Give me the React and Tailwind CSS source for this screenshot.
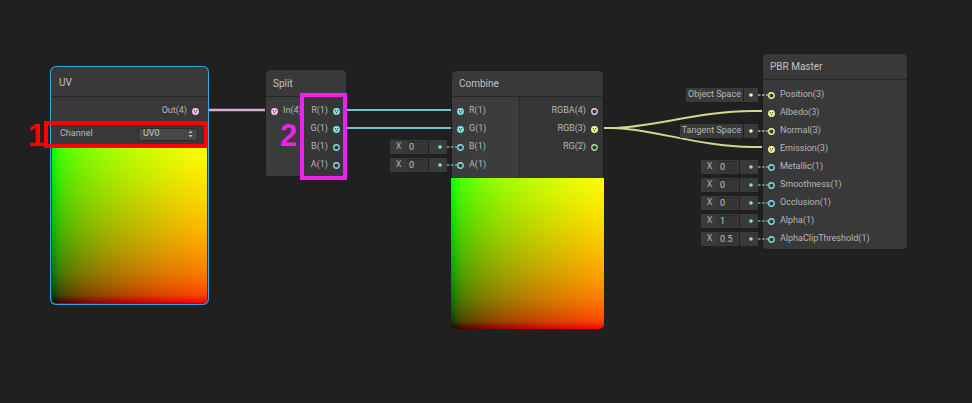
import React from 'react';

const COLORS = { v1: '#84e4e7', v2: '#9aef92', v3: '#f6ff9a', v4: '#fbcbf4' };

const UV_PREVIEW =
  'bg-[linear-gradient(to_right,#000,#410000_5%,#590000_10%,#7b0000_20%,#9e0000_35%,#ba0000_50%,#d90000_70%,#ed0000_85%,#f00),linear-gradient(to_top,#000,#004100_5%,#005900_10%,#007b00_20%,#009e00_35%,#00ba00_50%,#00d900_70%,#00ed00_85%,#0f0)] bg-blend-lighten';

function Port({ type, on }) {
  const c = COLORS[type];
  return (
    <svg width="7" height="7" viewBox="0 0 7 7" className="shrink-0">
      {on ? (
        <>
          <circle cx="3.5" cy="3.5" r="3.4" fill={c} />
          <rect x="1.8" y="2.2" width="1.2" height="1.2" fill="#3a3a3a" />
          <rect x="4" y="2.2" width="1.2" height="1.2" fill="#3a3a3a" />
          <rect x="2.9" y="4.2" width="1.2" height="1.2" fill="#3a3a3a" />
        </>
      ) : (
        <circle cx="3.5" cy="3.5" r="2.75" fill="none" stroke={c} strokeWidth="1.3" />
      )}
    </svg>
  );
}

function Dot({ type }) {
  return (
    <svg width="4" height="4" viewBox="0 0 4 4">
      <circle cx="2" cy="2" r="1.8" fill={COLORS[type]} />
    </svg>
  );
}

function Control({ type, kind, value, label }) {
  return (
    <>
      <div className="absolute right-[calc(100%+5px)] top-1/2 flex h-[14px] -translate-y-1/2 gap-px">
        {kind === 'x' ? (
          <div className="flex w-[38px] items-center bg-[#3a3a3a]">
            <span className="w-[17px] text-center text-[#b0b0b0]">X</span>
            <span className="h-[12px] w-[20px] border-t border-[#2b2b2b] bg-[#353535] pl-[2px] leading-[11px] text-[#c0c0c0]">{value}</span>
          </div>
        ) : (
          <div className={'flex items-center justify-center bg-[#3a3a3a] text-[#b8b8b8] ' + (label === 'Tangent Space' ? 'w-[63px]' : 'w-[57px]')}>
            {label}
          </div>
        )}
        <div className={'flex items-center justify-end bg-[#3a3a3a] pr-[5px] ' + (kind === 'x' ? 'w-[18px]' : 'w-[14px]')}>
          <Dot type={type} />
        </div>
      </div>
      <svg className="absolute left-[-5px] top-1/2 -translate-y-1/2" width="10" height="2" viewBox="0 0 10 2">
        <line x1="0" y1="1" x2="10" y2="1" stroke={COLORS[type]} strokeWidth="1.2" strokeDasharray="2.5 1.5" />
      </svg>
    </>
  );
}

function InRow({ label, type, on, control }) {
  return (
    <div className="relative flex h-[18px] items-center gap-[5px] pl-[5px]">
      {control && <Control type={type} {...control} />}
      <Port type={type} on={on} />
      <span>{label}</span>
    </div>
  );
}

function OutRow({ label, type, on, pr }) {
  return (
    <div className={'flex h-[18px] items-center justify-end gap-[5px] ' + pr}>
      <span>{label}</span>
      <Port type={type} on={on} />
    </div>
  );
}

const NODE_BORDER = {
  selected: 'border-transparent ring-1 ring-[#3aa6ea]',
  normal: 'border-[#1b1b1b]',
};

function Node({ pos, title, header, selected, children }) {
  return (
    <div
      className={
        'absolute flex flex-col rounded-[5px] border bg-[#383838] ' +
        (selected ? NODE_BORDER.selected : NODE_BORDER.normal) +
        ' ' +
        pos
      }
    >
      <div className={'flex shrink-0 items-center rounded-t-[5px] border-b border-[#262626] bg-[#393939] pl-[7px] text-[10px] text-[#c2c2c2] ' + header}>
        {title}
      </div>
      {children}
    </div>
  );
}

function Wires() {
  return (
    <svg className="absolute left-0 top-0" width="972" height="403" viewBox="0 0 972 403" fill="none">
      <line x1="199" y1="110" x2="272" y2="110" stroke="#d3b1d3" strokeWidth="2.5" />
      <line x1="339" y1="110" x2="458" y2="110" stroke="#6fc3c9" strokeWidth="2" />
      <line x1="339" y1="128" x2="458" y2="128" stroke="#6fc3c9" strokeWidth="2" />
      <path d="M597 128 L612 128 C 650 128 700 111 752 111 L769 111" stroke="#d6d68e" strokeWidth="2" />
      <path d="M597 128 L612 128 C 650 128 700 147 752 147 L769 147" stroke="#d6d68e" strokeWidth="2" />
    </svg>
  );
}

export default function App() {
  return (
    <div className="relative h-[403px] w-[972px] overflow-hidden bg-[#202020] font-['Roboto',sans-serif] text-[9px] text-[#b6b6b6]">
      <Wires />

      {/* UV */}
      <Node pos="left-[51px] top-[67px] w-[157px] h-[237px]" title="UV" header="h-[29px]" selected>
        <div className="pt-[5px]">
          <OutRow label="Out(4)" type="v4" on pr="pr-[8px]" />
        </div>
        <div className="flex h-[28px] items-center justify-between pl-[8px] pr-[9px]">
          <span className="text-[#b8b8b8]">Channel</span>
          <div className="flex h-[13px] w-[60px] items-center justify-between rounded-[2px] border border-[#2a2a2a] bg-[#474747] px-[4px] text-[#c8c8c8]">
            <span>UV0</span>
            <svg width="5" height="8" viewBox="0 0 5 8">
              <path d="M2.5 0.5 L4.5 3 L0.5 3 Z M2.5 7.5 L4.5 5 L0.5 5 Z" fill="#bdbdbd" />
            </svg>
          </div>
        </div>
        <div className={'flex-1 rounded-b-[4px] ' + UV_PREVIEW} />
      </Node>

      {/* Split */}
      <Node pos="left-[265px] top-[69px] w-[82px] h-[108px]" title="Split" header="h-[27px]">
        <div className="flex flex-1 rounded-b-[5px]">
          <div className="w-[38px] bg-[#3b3b3b] pt-[5px]">
            <InRow label="In(4)" type="v4" on />
          </div>
          <div className="flex-1 bg-[#363636] pt-[5px]">
            <OutRow label="R(1)" type="v1" on pr="pr-[6px]" />
            <OutRow label="G(1)" type="v1" on pr="pr-[6px]" />
            <OutRow label="B(1)" type="v1" pr="pr-[6px]" />
            <OutRow label="A(1)" type="v1" pr="pr-[6px]" />
          </div>
        </div>
      </Node>

      {/* Combine */}
      <Node pos="left-[451px] top-[70px] w-[153px] h-[259px]" title="Combine" header="h-[26px]">
        <div className="flex h-[81px]">
          <div className="w-[67px] bg-[#3c3c3c] pt-[5px]">
            <InRow label="R(1)" type="v1" on />
            <InRow label="G(1)" type="v1" on />
            <InRow label="B(1)" type="v1" control={{ kind: 'x', value: '0' }} />
            <InRow label="A(1)" type="v1" control={{ kind: 'x', value: '0' }} />
          </div>
          <div className="flex-1 border-l border-[#2c2c2c] bg-[#363636] pt-[5px]">
            <OutRow label="RGBA(4)" type="v4" pr="pr-[5px]" />
            <OutRow label="RGB(3)" type="v3" on pr="pr-[5px]" />
            <OutRow label="RG(2)" type="v2" pr="pr-[5px]" />
          </div>
        </div>
        <div className={'-mx-px -mb-px flex-1 rounded-b-[5px] ' + UV_PREVIEW} />
      </Node>

      {/* PBR Master */}
      <Node pos="left-[762px] top-[53px] w-[146px] h-[197px]" title="PBR Master" header="h-[26px]">
        <div className="flex-1 rounded-b-[5px] bg-[#393939] pt-[6px]">
          <InRow label="Position(3)" type="v3" control={{ kind: 'space', label: 'Object Space' }} />
          <InRow label="Albedo(3)" type="v3" on />
          <InRow label="Normal(3)" type="v3" control={{ kind: 'space', label: 'Tangent Space' }} />
          <InRow label="Emission(3)" type="v3" on />
          <InRow label="Metallic(1)" type="v1" control={{ kind: 'x', value: '0' }} />
          <InRow label="Smoothness(1)" type="v1" control={{ kind: 'x', value: '0' }} />
          <InRow label="Occlusion(1)" type="v1" control={{ kind: 'x', value: '0' }} />
          <InRow label="Alpha(1)" type="v1" control={{ kind: 'x', value: '1' }} />
          <InRow label="AlphaClipThreshold(1)" type="v1" control={{ kind: 'x', value: '0.5' }} />
        </div>
      </Node>

      {/* annotations */}
      <div className="absolute left-[44px] top-[121px] h-[27px] w-[164px] border-[4px] border-[#ff0000]" />
      <div className="absolute left-[28px] top-[120px] font-['Liberation_Sans',sans-serif] text-[31px] font-bold leading-[31px] text-[#ff0000]">1</div>
      <div className="absolute left-[300px] top-[93px] h-[87px] w-[47px] border-[4px] border-[#ee22ee]" />
      <div className="absolute left-[280px] top-[120px] font-['Liberation_Sans',sans-serif] text-[31px] font-bold leading-[31px] text-[#ee22ee]">2</div>
    </div>
  );
}
